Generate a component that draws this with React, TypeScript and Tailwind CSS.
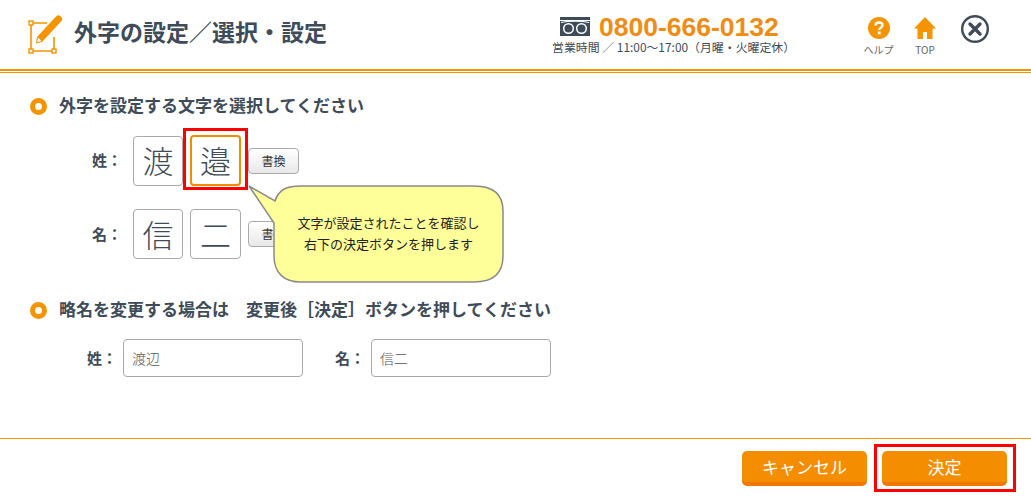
const jp = '"Noto Sans CJK JP", sans-serif'

function Logo() {
    return (
        <svg width="36" height="42" viewBox="0 0 36 42" className="shrink-0">
            <path d="M3 9H19M3 9V37M3 37H26M26 37V23" fill="none" stroke="#f59300" strokeWidth="1.6" />
            <rect x="1" y="7" width="4" height="4" fill="#fff" stroke="#f59300" strokeWidth="1.4" />
            <rect x="1" y="35" width="4" height="4" fill="#fff" stroke="#f59300" strokeWidth="1.4" />
            <rect x="24" y="35" width="4" height="4" fill="#fff" stroke="#f59300" strokeWidth="1.4" />
            <path d="M9 23L28 2.500C29.500 1 31 1 32.500 2.200L33.500 3.200C34.700 4.500 34.500 6 33.200 7.300L14 28L8 29.500Z" fill="#f59300" />
            <path d="M10 23.500L13.500 27L9.300 28.200Z" fill="#fff" />
        </svg>
    )
}

function FreeDial() {
    return (
        <svg width="30" height="20" viewBox="0 0 30 20" className="shrink-0">
            <rect x="0" y="0" width="30" height="3" fill="#3e4c59" />
            <path d="M0 4H30V19H0Z" fill="#3e4c59" />
            <circle cx="8.500" cy="11.500" r="4.800" fill="none" stroke="#fff" strokeWidth="1.500" />
            <circle cx="21.500" cy="11.500" r="4.800" fill="none" stroke="#fff" strokeWidth="1.500" />
            <path d="M1 5.500C8 3.800 22 3.800 29 5.500" fill="none" stroke="#fff" strokeWidth="1.200" />
        </svg>
    )
}

function Help() {
    return (
        <svg width="22" height="22" viewBox="0 0 22 22">
            <circle cx="11" cy="11" r="11" fill="#f59300" />
            <path d="M7.500 8.500C7.500 6.500 9 5.500 11 5.500C13 5.500 14.500 6.600 14.500 8.300C14.500 10.500 11.200 10.700 11.200 13" fill="none" stroke="#fff" strokeWidth="2.400" />
            <rect x="9.800" y="14.500" width="2.800" height="2.800" fill="#fff" />
        </svg>
    )
}

function Home() {
    return (
        <svg width="22" height="22" viewBox="0 0 22 22">
            <path d="M11 0L22 11.500H18.500V22H13V15H9V22H3.500V11.500H0Z" fill="#f59300" />
        </svg>
    )
}

function Close() {
    return (
        <svg width="28" height="28" viewBox="0 0 28 28">
            <circle cx="14" cy="14" r="12.800" fill="#fff" stroke="#3e4c59" strokeWidth="2.400" />
            <path d="M9 9L19 19M19 9L9 19" stroke="#3e4c59" strokeWidth="3.400" strokeLinecap="round" />
        </svg>
    )
}

function Ring() {
    return <span className="w-[17px] h-[17px] rounded-full border-[5px] border-[#f59300] shrink-0" />
}

function CharBox({ ch, active, wide }: { ch: string; active?: boolean; wide?: boolean }) {
    return (
        <div className={`flex items-center justify-center rounded-[4px] bg-white text-[31px] text-[#3e4c59] font-light ${wide ? 'w-[51px]' : 'w-[50px]'} ${active ? 'border-2 border-[#f08c00] h-[51px]' : 'border border-[#aaaaaa] h-[50px]'}`}>
            {ch}
        </div>
    )
}

function SwapButton() {
    return (
        <button className="w-[51px] h-[26px] rounded-[4px] border border-[#aaaaaa] bg-gradient-to-b from-white to-[#e8e8e8] text-[12px] text-[#333]">
            書換
        </button>
    )
}

function NameInput({ value }: { value: string }) {
    return (
        <div className="w-[180px] h-[38px] flex items-center px-2 rounded-[4px] border border-[#aaaaaa] bg-white text-[14px] text-[#555] font-light">
            {value}
        </div>
    )
}

function OrangeButton({ label }: { label: string }) {
    return (
        <button className="w-[125px] h-[35px] rounded-[5px] bg-[#f48d00] border-b-[4px] border-[#f07800] text-white text-[17px]">
            {label}
        </button>
    )
}

export default function App() {
    return (
        <div className="w-full h-screen flex flex-col bg-white overflow-hidden text-[#3e4c59]" style={{ fontFamily: jp }}>
            <header className="h-[73px] shrink-0 border-b border-[#f59300]">
                <div className="w-full h-[71px] border-b-2 border-[#f59300] flex items-start">
                    <div className="flex items-start w-[552px] pl-[28px] pt-[14px] gap-[10px]">
                        <Logo />
                        <h1 className="text-[23px] font-bold leading-none mt-[6px]">外字の設定／選択・設定</h1>
                    </div>
                    <div className="w-[308px] pt-[14px] flex flex-col">
                        <div className="flex items-center pl-[8px] gap-[9px] h-[26px]">
                            <FreeDial />
                            <span className="text-[26.500px] font-bold text-[#f08c14] leading-none" style={{ fontFamily: '"Liberation Sans", sans-serif' }}>0800-666-0132</span>
                        </div>
                        <p className="text-[11.900px] leading-none mt-[1px] whitespace-nowrap">営業時間 ／ 11:00～17:00（月曜・火曜定休）</p>
                    </div>
                    <div className="flex items-start">
                        <div className="w-[37px] pt-[17px] flex flex-col items-center">
                            <Help />
                            <span className="text-[10px] leading-none mt-[6px] text-[#666]">ヘルプ</span>
                        </div>
                        <div className="w-[22px] ml-[17px] pt-[17px] flex flex-col items-center">
                            <Home />
                            <span className="text-[10px] leading-none mt-[6px] text-[#666]">TOP</span>
                        </div>
                        <div className="pt-[15px] ml-[25px]">
                            <Close />
                        </div>
                    </div>
                </div>
            </header>

            <main className="relative flex-1 pl-[30px] pt-[25px]">
                <div className="flex items-center gap-[12px] h-[17px]">
                    <Ring />
                    <h2 className="text-[17px] font-bold pb-[3px]">外字を設定する文字を選択してください</h2>
                </div>

                <div className="flex items-center mt-[20px] pl-[62px]">
                    <span className="w-[41px] text-[15px] font-bold">姓：</span>
                    <div className="flex items-center gap-[7px]">
                        <CharBox ch="渡" />
                        <div className="relative">
                            <CharBox ch="邉" active wide />
                            <span className="absolute -left-[7px] -top-[7px] w-[65px] h-[62px] border-[3px] border-[#ff0000]" />
                        </div>
                        <SwapButton />
                    </div>
                </div>

                <div className="flex items-center mt-[23px] pl-[62px]">
                    <span className="w-[41px] text-[15px] font-bold">名：</span>
                    <div className="flex items-center gap-[7px]">
                        <CharBox ch="信" />
                        <CharBox ch="二" wide />
                        <SwapButton />
                    </div>
                </div>

                <div className="absolute left-[248px] top-[112px] w-[257px] h-[99px]">
                    <svg width="257" height="99" viewBox="0 0 257 99" className="absolute left-0 top-0">
                        <path d="M1 1L27 16C31 4 39 1 53 1H226C245 1 255 9 255 26V71C255 88 245 97 226 97H53C36 97 26 88 26 71V38Z" fill="#ffff99" stroke="#8a8a8a" strokeWidth="1.500" />
                    </svg>
                    <p className="absolute left-[26px] top-[27px] w-[229px] text-center text-[13px] leading-[21px] text-[#222]">
                        文字が設定されたことを確認し<br />右下の決定ボタンを押します
                    </p>
                </div>

                <div className="flex items-center gap-[12px] h-[17px] mt-[43px]">
                    <Ring />
                    <h2 className="text-[17px] font-bold whitespace-pre pb-[3px]">略名を変更する場合は　変更後［決定］ボタンを押してください</h2>
                </div>

                <div className="flex items-center mt-[20px] pl-[57px]">
                    <span className="w-[36px] text-[15px] font-bold">姓：</span>
                    <NameInput value="渡辺" />
                    <span className="w-[36px] ml-[32px] text-[15px] font-bold">名：</span>
                    <NameInput value="信二" />
                </div>
            </main>

            <footer className="h-[66px] shrink-0 border-t border-[#f59300] flex justify-end items-start pt-[12px] pr-[24px] gap-[15px]">
                <OrangeButton label="キャンセル" />
                <div className="relative flex">
                    <OrangeButton label="決定" />
                    <span className="absolute -left-[8px] -top-[7px] -right-[9px] -bottom-[6px] border-[3px] border-[#ff0000]" />
                </div>
            </footer>
        </div>
    )
}
